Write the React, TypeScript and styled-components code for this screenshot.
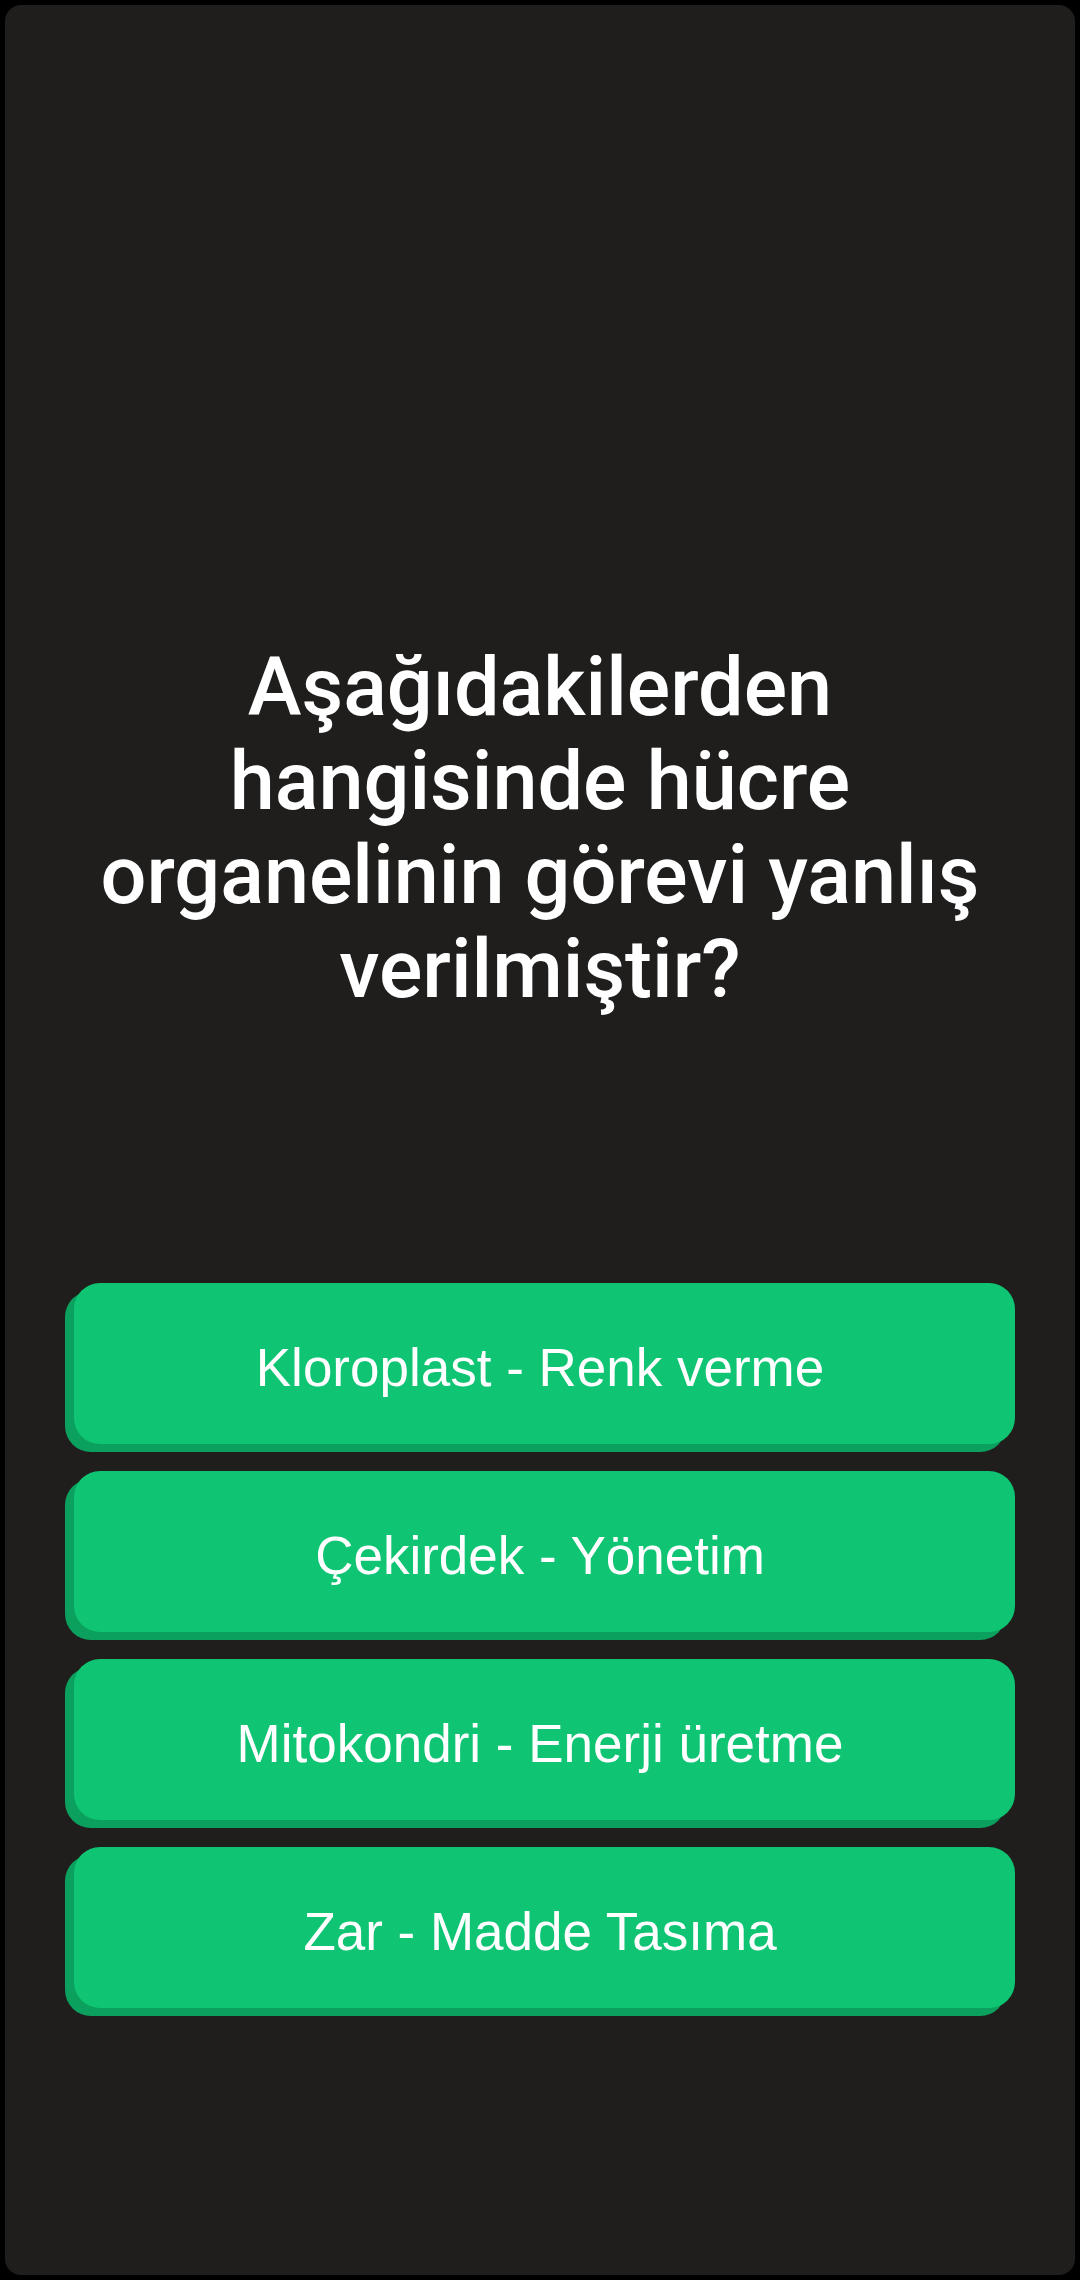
import React from 'react';
import styled, { createGlobalStyle } from 'styled-components';

const GlobalStyle = createGlobalStyle`
  html, body {
    margin: 0;
    padding: 0;
    background: #000000;
  }
  #root {
    min-height: 2280px;
  }
`;

const Screen = styled.div`
  box-sizing: border-box;
  height: 2280px;
  padding: 5px;
`;

const Panel = styled.main`
  box-sizing: border-box;
  height: 100%;
  background: #1f1e1d;
  border-radius: 16px;
  display: flex;
  flex-direction: column;
  padding: 636px 60px 0;
`;

const Question = styled.h1`
  margin: 0;
  font-family: Roboto, 'Noto Sans', sans-serif;
  font-weight: 500;
  font-size: 81px;
  line-height: 94px;
  color: #ffffff;
  text-align: center;
`;

const Options = styled.div`
  display: flex;
  flex-direction: column;
  gap: 27px;
  margin-top: 266px;
`;

const OptionButton = styled.button`
  box-sizing: border-box;
  height: 161px;
  margin: 0 0 0 9px;
  padding: 8px 9px 0 0;
  border: none;
  border-radius: 26px;
  background: #0fc472;
  box-shadow: -9px 8px 0 #0ba05e;
  color: #ffffff;
  font-family: 'Liberation Sans', Arial, sans-serif;
  font-size: 53px;
  text-align: center;
  cursor: pointer;
`;

const options = [
  'Kloroplast - Renk verme',
  'Çekirdek - Yönetim',
  'Mitokondri - Enerji üretme',
  'Zar - Madde Tasıma',
];

export default function App() {
  return (
    <>
      <GlobalStyle />
      <Screen>
        <Panel>
          <Question>Aşağıdakilerden hangisinde hücre organelinin görevi yanlış verilmiştir?</Question>
          <Options>
            {options.map((o) => (
              <OptionButton key={o}>{o}</OptionButton>
            ))}
          </Options>
        </Panel>
      </Screen>
    </>
  );
}
